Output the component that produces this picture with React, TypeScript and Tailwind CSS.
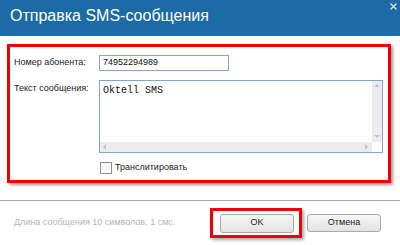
import React from "react";

function ScrollArrow({ dir }: { dir: "up" | "down" | "left" | "right" }) {
  const pts =
    dir === "up"
      ? "1,5 4,2 7,5"
      : dir === "down"
      ? "1,2 4,5 7,2"
      : dir === "left"
      ? "5,1 2,4 5,7"
      : "2,1 5,4 2,7";
  return (
    <svg width="8" height="8" viewBox="0 0 8 8">
      <polygon points={pts} fill="#c2c4ca" />
    </svg>
  );
}

export default function App() {
  const font = { fontFamily: '"Liberation Sans", Arial, sans-serif' };
  return (
    <div className="w-[400px] h-[245px] bg-white flex flex-col overflow-hidden" style={font}>
      {/* Title bar */}
      <div className="relative h-[36px] bg-[#1c6ba7] flex items-start pl-[10px] pt-[6px] shrink-0">
        <span className="text-white text-[16px] leading-[20px]">Отправка SMS-сообщения</span>
        <svg className="absolute top-[3px] right-[3px]" width="7" height="7" viewBox="0 0 7 7">
          <path d="M0.5 0.5 L6.5 6.5 M6.5 0.5 L0.5 6.5" stroke="#d8e4ef" strokeWidth="1.4" />
        </svg>
      </div>

      {/* Red highlighted area */}
      <div className="ml-[7px] mt-[8px] w-[384px] h-[139px] border-[3px] border-[#f00000] shadow-[2px_2px_3px_rgba(0,0,0,0.4)] flex flex-col pl-[4px] pt-[8px] shrink-0">
        <div className="flex items-center h-[16px]">
          <div className="w-[85px] text-[9px] text-[#222]">Номер абонента:</div>
          <div className="w-[130px] h-[16px] border border-[#7ea6cf] flex items-center pl-[3px] text-[9px] text-[#111]">
            74952294989
          </div>
        </div>
        <div className="flex items-start mt-[9px]">
          <div className="w-[85px] text-[9px] text-[#222] pt-[2px]">Текст сообщения:</div>
          <div className="w-[284px] h-[73px] border border-[#7ea6cf] flex flex-col">
            <div className="flex flex-1">
              <div className="flex-1 pl-[3px] pt-[4px] text-[10px] leading-[12px] text-[#111]" style={{ fontFamily: '"Liberation Mono", "Courier New", monospace' }}>
                Oktell SMS
              </div>
              <div className="w-[10px] bg-[#ececf0] flex flex-col items-center justify-between py-[1px]">
                <ScrollArrow dir="up" />
                <ScrollArrow dir="down" />
              </div>
            </div>
            <div className="flex h-[10px]">
              <div className="flex-1 bg-[#ececf0] flex items-center justify-between px-[1px]">
                <ScrollArrow dir="left" />
                <ScrollArrow dir="right" />
              </div>
              <div className="w-[10px] bg-white" />
            </div>
          </div>
        </div>
        <div className="flex items-center mt-[8px] ml-[86px]">
          <div className="w-[12px] h-[12px] border border-[#8f8f8f] bg-gradient-to-b from-[#f4f4f4] to-[#ffffff]" />
          <span className="ml-[3px] text-[9px] text-[#222]">Транслитировать</span>
        </div>
      </div>

      {/* Separator */}
      <div className="mt-[17px] h-px bg-[#a7a7a7] shrink-0" />

      {/* Footer */}
      <div className="flex items-center h-[44px] pl-[14px] pr-[19px]">
        <span className="text-[9px] text-[#b5b5b5] flex-1">Длина сообщения 10 символов, 1 смс.</span>
        <div className="relative">
          <div className="absolute left-[-10px] top-[-6px] w-[92px] h-[30px] border-[3px] border-[#f00000] shadow-[2px_2px_3px_rgba(0,0,0,0.35)]" />
          <button className="relative w-[74px] h-[19px] rounded-[3px] border border-[#a9a9a9] bg-gradient-to-b from-[#f6f6f6] to-[#e3e3e3] text-[9px] text-[#222] flex items-center justify-center">
            OK
          </button>
        </div>
        <button className="ml-[13px] w-[74px] h-[18px] rounded-[3px] border border-[#a9a9a9] bg-gradient-to-b from-[#f6f6f6] to-[#e3e3e3] text-[9px] text-[#222] flex items-center justify-center">
          Отмена
        </button>
      </div>
    </div>
  );
}
